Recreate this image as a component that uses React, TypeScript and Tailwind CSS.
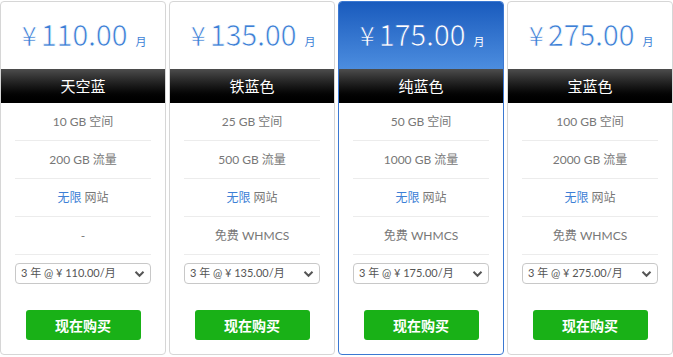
import React from "react";

type Plan = {
  price: string;
  name: string;
  space: string;
  traffic: string;
  extra: React.ReactNode;
  featured?: boolean;
};

const plans: Plan[] = [
  { price: "110.00", name: "天空蓝", space: "10 GB", traffic: "200 GB", extra: "-" },
  { price: "135.00", name: "铁蓝色", space: "25 GB", traffic: "500 GB", extra: "免费 WHMCS" },
  { price: "175.00", name: "纯蓝色", space: "50 GB", traffic: "1000 GB", extra: "免费 WHMCS", featured: true },
  { price: "275.00", name: "宝蓝色", space: "100 GB", traffic: "2000 GB", extra: "免费 WHMCS" },
];

const font = { fontFamily: '"Lato", "Noto Sans CJK SC", sans-serif' };
const priceFont = { fontFamily: '"Noto Sans CJK SC", "Noto Sans", sans-serif' };

function Card({ p }: { p: Plan }) {
  return (
    <div
      className={
        "flex flex-col rounded-[4px] border bg-white " +
        (p.featured ? "border-[#3b78d2]" : "border-[#d6d6d6]")
      }
    >
      <div
        className={
          "flex h-[67px] items-center justify-center rounded-t-[3px] " +
          (p.featured
            ? "bg-gradient-to-b from-[#195bbd] to-[#4c8ddf] text-white [-webkit-text-stroke:0.7px_#2f6fcc]"
            : "text-[#3d7fd6] [-webkit-text-stroke:0.7px_white]")
        }
      >
        <div className="flex items-baseline pb-[5px] pl-[2px]" style={priceFont}>
          <span className="text-[27px] leading-none mr-[4px]">¥</span>
          <span className="text-[29px] leading-none tracking-[-0.3px]">{p.price}</span>
          <span className="ml-[8px] text-[11px] leading-none [-webkit-text-stroke:0px_white]">月</span>
        </div>
      </div>
      <div className="flex h-[34px] items-center justify-center bg-gradient-to-b from-[#4d4d4d] to-[#000] text-[15px] text-white">
        {p.name}
      </div>
      <div className="px-[14px] text-[12px] text-[#777]">
        <div className="flex h-[38px] items-center justify-center border-b border-[#ececec]">
          {p.space} 空间
        </div>
        <div className="flex h-[38px] items-center justify-center border-b border-[#ececec]">
          {p.traffic} 流量
        </div>
        <div className="flex h-[38px] items-center justify-center border-b border-[#ececec]">
          <span className="text-[#3d7fd6]">无限</span>&nbsp;网站
        </div>
        <div className="flex h-[38px] items-center justify-center border-b border-[#ececec]">
          {p.extra}
        </div>
        <div className="mt-[8px] flex h-[21px] items-center justify-between rounded-[4px] border border-[#c8c8c8] pl-[5px] pr-[5px] text-[11px] text-[#555]">
          <span>3 年 @ ¥ {p.price}/月</span>
          <svg width="11" height="8" viewBox="0 0 11 8">
            <path d="M1.5 1.8 L5.5 5.8 L9.5 1.8" fill="none" stroke="#555" strokeWidth="2" />
          </svg>
        </div>
      </div>
      <div className="mt-[26px] mb-[14px] flex justify-center">
        <div className="flex h-[30px] w-[115px] items-center justify-center rounded-[3px] bg-[#19b117] text-[14px] font-bold text-white">
          现在购买
        </div>
      </div>
    </div>
  );
}

export default function App() {
  return (
    <div className="h-[357px] w-[673px] bg-white pt-[1px]" style={font}>
      <div className="grid grid-cols-4 gap-[3px]">
        {plans.map((p) => (
          <Card key={p.name} p={p} />
        ))}
      </div>
    </div>
  );
}
